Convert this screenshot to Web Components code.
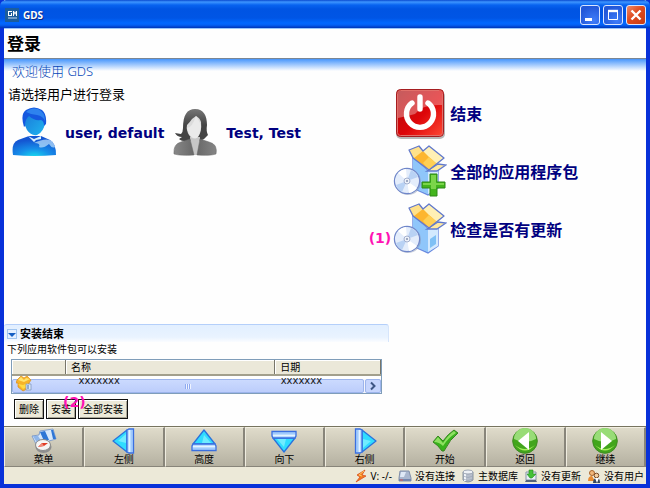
<!DOCTYPE html>
<html lang="zh-CN">
<head>
<meta charset="utf-8">
<title>GDS</title>
<style>
  body { margin: 0; font-family: "Noto Sans", "Noto Sans CJK SC", sans-serif; color: #000; }
</style>
</head>
<body>
<gds-window>
  <gds-titlebar slot="title">GDS</gds-titlebar>
  <gds-login slot="content"></gds-login>
  <gds-packages slot="content"></gds-packages>
  <gds-tool slot="tools" icon="menu">菜单</gds-tool>
  <gds-tool slot="tools" icon="left">左侧</gds-tool>
  <gds-tool slot="tools" icon="up">高度</gds-tool>
  <gds-tool slot="tools" icon="down">向下</gds-tool>
  <gds-tool slot="tools" icon="right">右侧</gds-tool>
  <gds-tool slot="tools" icon="check">开始</gds-tool>
  <gds-tool slot="tools" icon="back">返回</gds-tool>
  <gds-tool slot="tools" icon="next">继续</gds-tool>
  <gds-status slot="status" icon="bolt">V: -/-</gds-status>
  <gds-status slot="status" icon="drive">没有连接</gds-status>
  <gds-status slot="status" icon="db">主数据库</gds-status>
  <gds-status slot="status" icon="update">没有更新</gds-status>
  <gds-status slot="status" icon="people">没有用户</gds-status>
</gds-window>

<script>
const box = `
  <path d="M20 13V43L35 50L45 43V25L35 26Z" fill="#a9d3fb" stroke="#6b8be0" stroke-width="1.4"/>
  <path d="M20 13L35 26V49L20 43Z" fill="#8fc6fa"/>
  <path d="M35 26L45 24V43L35 49Z" fill="#d3e9fe"/>
  <path d="M37 36L43 32V41L37 45Z" fill="#7fc0f5"/>
  <path d="M34 26L45 19L53 20L44 26Z" fill="#ffe9a0" stroke="#6079cf" stroke-width="1.3"/>
  <path d="M20 13L16 5L26 1L30 6L36 1L51 13L36 25Z" fill="#fdb62f"/>
  <path d="M30 6L36 1L51 13L44 19L36 12Z" fill="#fff0b5"/>
  <path d="M16 5L26 1L30 6L21 13Z" fill="#ffe18a"/>
  <path d="M36 12L44 19L36 25L30 18Z" fill="#ffcf55"/>
  <path d="M36 25L20 13L16 5L26 1L30 6L36 1L51 13Z" fill="none" stroke="#6079cf" stroke-width="1.3" stroke-linejoin="round"/>
  <circle cx="15" cy="37" r="13" fill="#8a95b5" opacity=".5"/>
  <circle cx="14" cy="36" r="12.6" fill="#e4edfb" stroke="#6f86c9" stroke-width="1.2"/>
  <path d="M14 36L5 28A12 12 0 0 1 13 24Z M14 36L24 43A12 12 0 0 1 16 48Z" fill="#fff"/>
  <path d="M14 36L18 25A12 12 0 0 1 25 32Z M14 36L3 40A12 12 0 0 0 9 47Z" fill="#b9d2f4"/>
  <circle cx="14" cy="36" r="3" fill="#eef2f9" stroke="#a3b0cf"/><circle cx="14" cy="36" r="1" fill="#8592b0"/>`;
const tri = `
  <path d="M2 13L16 2V24Z" fill="#2fdcff" stroke="#2a72dc" stroke-linejoin="round" stroke-width="1.3"/>
  <path d="M7 13L15 6V15Z" fill="#8cf2ff" opacity=".7"/>
  <path d="M16 2L18 1H22.5V25H18L16 24Z" fill="#b9dcff" stroke="#3a6fe0" stroke-width="1.3"/>
  <path d="M18.5 2V24" stroke="#e6f3ff"/><path d="M21 2V24" stroke="#8ab8f8"/>`;
const ball = `
  <circle cx="13" cy="13" r="12.3" fill="#42a51c" stroke="#418b25"/>
  <path d="M2 11A11 11 0 0 1 24 11Q13 17 2 11Z" fill="#98dc77"/>
  <path d="M3 17Q13 28 23 17Q13 25 3 17Z" fill="#a6f05c"/>`;
const ICONS = {
  logo: [14, 14, `<rect width="14" height="14" fill="#1c5d9c"/><path d="M3 3H7V4H4V7H6V5H7V8H3ZM8 3H9L10 5L11 3H12V8H11V5L10 7L9 5V8H8Z" fill="#fff"/><path d="M3 10H12" stroke="#c7dbef"/>`],
  min: [18, 18, `<path d="M4 13.5H11" stroke="#fff" stroke-width="3"/>`],
  max: [18, 18, `<path d="M4.5 5V13.5H13.5V5Z" fill="none" stroke="#fff"/><path d="M4 5H14" stroke="#fff" stroke-width="2.4"/>`],
  close: [18, 18, `<path d="M4.5 4.5L13.5 13.5M13.5 4.5L4.5 13.5" stroke="#fff" stroke-width="2.4"/>`],
  man: [44, 49, `
    <defs><radialGradient id="b" cx=".5" cy="1" r=".8"><stop stop-color="#16d4ee"/><stop offset=".45" stop-color="#168ee9"/><stop offset="1" stop-color="#1456d2"/></radialGradient>
    <linearGradient id="f" x2="1" y2="1"><stop stop-color="#1a77d8"/><stop offset="1" stop-color="#20b5ef"/></linearGradient></defs>
    <path d="M1 48Q-1 36 6 33L17 29H29L38 33Q44 36 44 48Q22 50 1 48Z" fill="url(#b)"/>
    <path d="M22 36Q34 30 40 34Q42 37 43 40Q40 42 37 37Q31 42 27 40Q29 36 22 36Z" fill="#b5dcfa" opacity=".75"/>
    <path d="M16 29L22 32L29 29V32L24 33L22 35L19 32Z" fill="#d9f1fd"/>
    <path d="M12 12Q14 3 23 4Q33 5 33 15Q32 25 25 28Q19 29 15 23Q12 18 12 12Z" fill="url(#f)"/>
    <path d="M12 20Q8 7 14 3Q22-2 30 3Q35 7 34 17L32 19Q32 14 29 13Q22 14 17 9Q13 12 13 19Z" fill="#1558df"/>
    <path d="M14 5Q20 8 25 8Q31 9 33 14Q33 5 26 2Q19 0 14 5Z" fill="#2e82ee"/>`],
  woman: [44, 49, `
    <defs><linearGradient id="g" x2="0" y2="1"><stop stop-color="#777"/><stop offset=".5" stop-color="#444"/><stop offset="1" stop-color="#444"/></linearGradient>
    <linearGradient id="w" x2="1"><stop stop-color="#888"/><stop offset=".5" stop-color="#666"/><stop offset="1" stop-color="#858585"/></linearGradient></defs>
    <path d="M10 21C10 8 14 2 22 2C31 2 34 9 34 18Q33 24 35 28Q32 32 27 34H17Q9 35 6 32L9 30Q4 30 2 26L8 27Q10 25 10 21Z" fill="url(#g)"/>
    <path d="M17 30H27L26 48H18Z" fill="#c6c6c6"/>
    <path d="M14 18Q17 15 19 12L23 9Q27 11 28 15Q29 25 25 30Q20 34 16 28Q13 23 14 18Z" fill="#dcdcdc"/>
    <path d="M14 21Q19 21 23 9Q27 15 28 19Q27 27 24 31Q19 32 16 27Z" fill="#eaeaea"/>
    <path d="M1 47Q0 37 8 35L17 32L21 48Q8 49 1 47ZM43 47Q45 37 36 35L27 32L24 48Q37 49 43 47Z" fill="url(#w)" stroke="#666" stroke-width=".5"/>`],
  power: [54, 52, `
    <defs><linearGradient id="r" x2="1" y2="1"><stop stop-color="#a80f12"/><stop offset=".55" stop-color="#dd0509"/><stop offset="1" stop-color="#ff4a35"/></linearGradient></defs>
    <rect x="3" y="4" width="49" height="48" rx="5" fill="#888" opacity=".6"/>
    <rect x="3.5" y="2.5" width="47" height="47" rx="4" fill="url(#r)" stroke="#a51d20"/>
    <path d="M5 31V6Q5 4 7 4H47Q49 4 49 6V18Q29 17 22 27Q15 29 5 31Z" fill="#fff" opacity=".32"/>
    <rect x="4.5" y="3.5" width="45" height="45" rx="3" fill="none" stroke="#e2706a"/>
    <path d="M19 16A13.5 13.5 0 1 0 35 16M27 10V22" fill="none" stroke="#fff" stroke-width="5.4" stroke-linecap="round"/>`],
  box: [54, 52, box],
  boxplus: [54, 52, box + `<path d="M37 29H44V37H52V43H44V51H37V43H29V37H37Z" fill="#43b51d" stroke="#2e8718"/><path d="M38 30H43V38H51V40H43V44H38V40H30V38H38Z" fill="#7bd54a"/>`],
  collapse: [10, 10, `<path d="M.5.5H9.5V9.5H.5Z" fill="#e4f0ff" stroke="#5f9be0" stroke-dasharray="1 1"/><path d="M1 4H9L5 8Z" fill="#1660c4"/>`],
  pkg: [16, 18, `<path d="M1 5L5 1L8 3L11 1L15 5L13 8V13L7 16L2 12V8L0 8Z" fill="#f6b329" stroke="#dc8d19" stroke-width=".7"/><path d="M2 5L8 7L14 4L10 3L8 5L5 2Z" fill="#ffe36d"/><path d="M2 9L7 10L12 8L11 12L7 14Z" fill="#ffda42"/><path d="M10 9H15V15H10Z" fill="#d9e8fa" stroke="#7a91b8" stroke-width=".7"/><path d="M12 10V14" stroke="#456caa"/>`],
  chev: [10, 10, `<path d="M3 1.5L6.5 5L3 8.5" fill="none" stroke="#3e5684" stroke-width="2"/>`],
  menu: [26, 26, `<path d="M1 8L8 7L9 3L22 1L25 11L18 13L15 18L5 16Z" fill="#d8e8fa" stroke="#6c8fc6" stroke-width=".8"/><path d="M9 4L14 3L18 12L13 13ZM20 2L22 2L25 11L22 11Z" fill="#2e76d6"/><path d="M2 8L7 8L11 14L6 15Z" fill="#8fb6ea"/><ellipse cx="12.5" cy="19" rx="8" ry="6" fill="#8e8e8e"/><ellipse cx="12" cy="17" rx="7.5" ry="5.5" fill="#f5f5f5" stroke="#8b8b8b"/><path d="M7 19L11 15L17 15L13 18Z" fill="#e03a24"/><path d="M7 19L11 15L13 18Z" fill="#f08b7c"/>`],
  left: [26, 26, tri],
  right: [26, 26, `<g transform="rotate(180 13 13)">${tri}</g>`],
  up: [26, 26, `<g transform="rotate(90 13 13)">${tri}</g>`],
  down: [26, 26, `<g transform="rotate(-90 13 13)">${tri}</g>`],
  check: [26, 26, `<path d="M1 14L6 8L11 13Q16 6 22 2L26 5Q18 11 12 23H10Q6 17 1 14Z" fill="#38b21c" stroke="#37851f"/><path d="M2 14L6 9L11 15Q16 7 22 3L24 5Q16 10 11 18Q7 14 2 14Z" fill="#8fe062"/>`],
  back: [26, 26, ball + `<path d="M6 13L17 4V22Z" fill="#fff"/>`],
  next: [26, 26, ball + `<path d="M20 13L9 4V22Z" fill="#fff"/>`],
  bolt: [14, 14, `<path d="M11 1L3 6L6 8L2 13L12 7L8 6Z" fill="#f47b1e" stroke="#d84f20" stroke-width=".8"/><path d="M10 2L5 6L8 7" fill="none" stroke="#ffc65a"/>`],
  drive: [14, 14, `<path d="M2 2H11L13 9V12H1V9Z" fill="#a9b7cf" stroke="#8290aa"/><path d="M3 3H8L6 8H2Z" fill="#dfe9f6"/><path d="M1 10H13V12H1Z" fill="#7386ad"/><path d="M2 11H5" stroke="#e55b50"/>`],
  db: [14, 14, `<path d="M2 3V11Q7 15 12 11V3Z" fill="#b7bfcc" stroke="#727d90" stroke-width=".8"/><path d="M4 4V12" stroke="#f3f6fa" stroke-width="2"/><path d="M2 7Q7 10 12 7M2 10Q7 13 12 10" fill="none" stroke="#9aa4b4" stroke-width=".7"/><ellipse cx="7" cy="3" rx="5" ry="2" fill="#eef1f6" stroke="#8e98a8" stroke-width=".8"/>`],
  update: [14, 14, `<path d="M2 3H12V11H2Z" fill="#e8eef5" stroke="#8795a8"/><path d="M2 11H12L13 13H1Z" fill="#54647c"/><path d="M5 1H9V5H12L8 9H6L3 5H5Z" fill="#45c036" stroke="#278a21" stroke-width=".6"/>`],
  people: [14, 14, `<circle cx="5" cy="4" r="2.5" fill="#f1b77c" stroke="#a8642c"/><path d="M1 12Q1 7 5 7L8 12Z" fill="#e88b32"/><circle cx="9.5" cy="6.5" r="2.3" fill="#f6cf9f" stroke="#7a4a28"/><path d="M6 14Q6 9 10 9Q13 9 13 14Z" fill="#38485f"/><path d="M8 9H12L10 14Z" fill="#fff"/>`]
};

const define = (name, html, setup) => customElements.define(name, class extends HTMLElement {
  constructor() {
    super();
    const t = document.createElement('template');
    t.innerHTML = html;
    this.attachShadow({ mode: 'open' }).append(t.content.cloneNode(true));
  }
  connectedCallback() { if (setup) setup(this.shadowRoot, this); }
});

const passIcon = (root, host) => root.querySelector('gds-icon').setAttribute('name', host.getAttribute('icon'));

customElements.define('gds-icon', class extends HTMLElement {
  static observedAttributes = ['name'];
  constructor() {
    super();
    this.attachShadow({ mode: 'open' });
  }
  attributeChangedCallback(attr, old, name) {
    if (!ICONS[name]) return;
    const [w, h, body] = ICONS[name];
    this.shadowRoot.innerHTML = `<style>:host{display:block;flex:none}svg{display:block}</style>
      <svg aria-hidden="true" width="${w}" height="${h}" viewBox="0 0 ${w} ${h}">${body}</svg>`;
  }
});

define('gds-window', `
<style>
  :host{display:flex;flex-direction:column;min-height:100vh;box-sizing:border-box;background:#fefefe;border:4px solid #0831d9;border-top:0}
  header{margin:0 -4px}
  main{flex:1;display:flex;flex-direction:column}
  nav{display:grid;grid-template-columns:repeat(8,1fr);border-top:1px solid #77745f}
  footer{display:flex;justify-content:flex-end;align-items:center;gap:6px;height:17px;padding-right:2px;background:#ece9d8}
</style>
<header><slot name="title"></slot></header>
<main><slot name="content"></slot></main>
<nav><slot name="tools"></slot></nav>
<footer><slot name="status"></slot></footer>`);

define('gds-titlebar', `
<style>
  :host{display:flex;align-items:center;height:28px;padding:2px 4px 0 5px;box-sizing:border-box;gap:4px;color:#fff;font-weight:700;font-size:10px;
    border-radius:6px 6px 0 0;background:linear-gradient(#0a4ad0,#3d95ff 2px,#0863f0 5px,#0054e3 9px,#0055e5 18px,#0268ff 23px,#0460f5 25px,#0035b8)}
  span{flex:1;text-shadow:1px 1px #0a2a80}
  div{display:flex;gap:3px}
  button{display:block;padding:0;border:1px solid #dbe6ff;border-radius:3px;background:radial-gradient(circle at 70% 80%,#3f7dfa,#2257d8 75%)}
  button.close{background:linear-gradient(135deg,#ee8a68,#df4b1f 45%,#c83d14)}
</style>
<gds-icon name="logo"></gds-icon><span><slot></slot></span>
<div><button aria-label="最小化"><gds-icon name="min"></gds-icon></button><button aria-label="最大化"><gds-icon name="max"></gds-icon></button><button class="close" aria-label="关闭"><gds-icon name="close"></gds-icon></button></div>`);

define('gds-login', `
<style>
  :host{display:block;flex:1}
  h1{margin:0;padding-left:3px;height:31px;line-height:30px;font-size:17px;border-bottom:1px solid #7a8694;border-top:1px solid #9ac6fb;box-sizing:border-box}
  h2{margin:0;padding-left:8px;font-size:13px;font-weight:300;line-height:25px;color:#0648b8;background:linear-gradient(#4796fc,#fefefe 12px)}
  .cols{display:grid;grid-template-columns:3fr 2fr}
  p{margin:0 0 3px;padding-left:4px;font-size:13px;line-height:20px}
  .users{display:flex;gap:9px;padding-left:8px}
  .actions{display:flex;flex-direction:column;gap:6px;padding:3px 0 0 4px}
</style>
<h1>登录</h1>
<h2>欢迎使用 GDS</h2>
<div class="cols">
  <section><p>请选择用户进行登录</p>
    <div class="users"><gds-user icon="man">user, default</gds-user><gds-user icon="woman">Test, Test</gds-user></div>
  </section>
  <div class="actions"><gds-action icon="power">结束</gds-action><gds-action icon="boxplus">全部的应用程序包</gds-action><gds-action icon="box" note="(1)">检查是否有更新</gds-action></div>
</div>`);

define('gds-user', `
<style>
  :host{display:block}
  button{display:flex;align-items:center;gap:9px;padding:0;border:0;background:none;color:#000080;font:700 14px/20px "DejaVu Sans",sans-serif;white-space:nowrap}
  span{padding-top:2px}
</style><button><gds-icon></gds-icon><span><slot></slot></span></button>`, passIcon);

define('gds-action', `
<style>
  :host{display:block;position:relative}
  button{display:flex;align-items:center;gap:3px;padding:0;border:0;background:none;color:#000080;font:700 16px/24px "Noto Sans CJK SC",sans-serif;white-space:nowrap}
  b{position:absolute;right:100%;top:26px;margin-right:2px;color:#ff12b4;font:700 14px/18px "DejaVu Sans",sans-serif}
  b:empty{display:none}
</style><b></b><button><gds-icon></gds-icon><span><slot></slot></span></button>`, (root, host) => {
  passIcon(root, host);
  root.querySelector('b').textContent = host.getAttribute('note') || '';
});

define('gds-packages', `
<style>
  :host{display:block;width:60%;font-size:10px;line-height:14px;padding-bottom:7px}
  h3{display:flex;align-items:center;gap:3px;margin:0;height:17px;padding-left:3px;font-size:11px;border-top:1px solid #b4cffa;border-right:1px solid #d6e5fb;border-radius:3px 3px 0 0;background:linear-gradient(#e2efff,#e9f3ff 12px,#fafcff)}
  p{margin:0 0 3px 3px}
  .list{position:relative;margin:0 7px;border:1px solid #7f9db9;height:33px;overflow:hidden}
  table{width:100%;border-collapse:collapse;table-layout:fixed;position:relative;z-index:1}
  th{height:14px;padding:0 0 0 5px;text-align:left;font-weight:400;line-height:13px;background:#ebe8d9;border-bottom:2px solid #a29f8c;border-right:1px solid #77756a;box-shadow:inset 1px 1px #fff}
  th:nth-child(1){width:48px}th:nth-child(3){width:100px}
  td{padding:0 0 0 13px;vertical-align:top;font:10px/10px "DejaVu Sans",sans-serif;color:#222}
  td:first-child{padding-left:4px}td:last-child{padding-left:6px}
  td gds-icon{margin-top:-1px}
  .bar{position:absolute;left:0;right:0;bottom:0;display:flex;gap:1px;height:14px;background:#f3f5fd}
  .thumb{flex:1;display:flex;justify-content:center;align-items:center;border:1px solid #9cb4ec;border-radius:2px;background:linear-gradient(#cbdafe,#bccdfb)}
  .thumb i{width:6px;height:5px;background:repeating-linear-gradient(90deg,#8eaaf0 0 1px,#eef3ff 1px 2px)}
  .bar button{padding:0 2px;border:1px solid #9cb4ec;border-radius:2px;background:#c6d5fd}
  .buttons{display:flex;gap:2px;margin:5px 0 0 10px}
  .buttons div{position:relative}
  .buttons button{display:block;height:20px;padding:0 4px;border:1px solid #111;background:#ece9d8;color:#000;font:inherit;box-shadow:inset 1px 1px #fff,inset -1px -1px #aaa697;white-space:nowrap}
  b{position:absolute;left:17px;top:-6px;z-index:1;color:#ff12b4;font:700 14px/18px "DejaVu Sans",sans-serif}
</style>
<h3><gds-icon name="collapse"></gds-icon>安装结束</h3>
<p>下列应用软件包可以安装</p>
<div class="list">
  <table><thead><tr><th></th><th>名称</th><th>日期</th></tr></thead><tbody><tr><td><gds-icon name="pkg"></gds-icon></td><td>xxxxxxx</td><td>xxxxxxx</td></tr></tbody></table>
  <div class="bar"><div class="thumb"><i></i></div><button aria-label="向右滚动"><gds-icon name="chev"></gds-icon></button></div>
</div>
<div class="buttons"><div><button>删除</button></div><div><button>安装</button><b>(2)</b></div><div><button>全部安装</button></div></div>`);

define('gds-tool', `
<style>
  :host{display:block}
  button{display:flex;flex-direction:column;align-items:center;width:100%;height:40px;padding:0;border:solid;border-width:1px 2px 1px 1px;border-color:#f3f0e2 #88857a #88857a #efecdf;background:linear-gradient(#dfdbca,#b5b1a1);color:#000;font:10px/10px "Noto Sans","Noto Sans CJK SC",sans-serif}
</style><button><gds-icon></gds-icon><span><slot></slot></span></button>`, passIcon);

define('gds-status', `
<style>:host{display:flex;align-items:center;gap:3px;font-size:10px;line-height:14px;white-space:nowrap}</style>
<gds-icon></gds-icon><span><slot></slot></span>`, passIcon);
</script>
</body>
</html>
